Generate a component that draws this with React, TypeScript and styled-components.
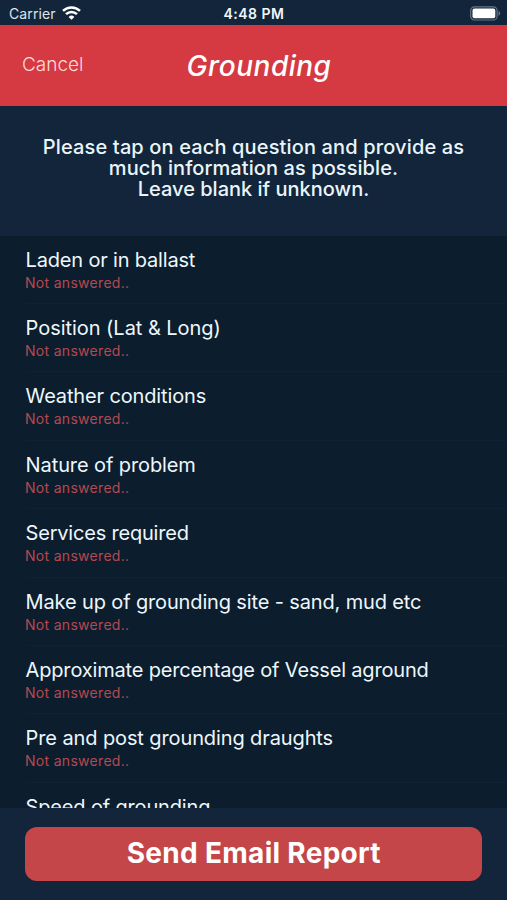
import React from 'react';
import styled, { createGlobalStyle } from 'styled-components';

const GlobalStyle = createGlobalStyle`
  *, *::before, *::after { box-sizing: border-box; }
  body { margin: 0; background: #12253a; }
`;

const Screen = styled.div`
  display: flex;
  flex-direction: column;
  width: 100%;
  height: 900px;
  overflow: hidden;
  background: #12253a;
  font-family: Inter, sans-serif;
  color: #eef7fc;
`;

const StatusBar = styled.div`
  flex: none;
  display: grid;
  grid-template-columns: 1fr auto 1fr;
  align-items: center;
  height: 25.3px;
  padding: 2px 6px 0 9px;
  font-size: 14px;
  line-height: 20px;
`;

const Network = styled.div`
  display: flex;
  align-items: center;
  gap: 6px;
  letter-spacing: 0.12px;
  color: #dde6ee;

  svg { margin-bottom: 2px; }
`;

const Clock = styled.div`
  margin-right: 2px;
  font-weight: 600;
  letter-spacing: 0.5px;
`;

const Battery = styled.div`
  display: flex;
  justify-content: flex-end;
  padding-bottom: 1px;
`;

const NavBar = styled.header`
  flex: none;
  display: grid;
  grid-template-columns: 1fr auto 1fr;
  align-items: center;
  height: 80.7px;
  padding: 0 22px;
  background: #d53a42;
`;

const CancelButton = styled.button`
  justify-self: start;
  padding: 0 0 2px;
  border: 0;
  background: none;
  color: #ffdadb;
  font: 300 19px/24px Inter, sans-serif;
`;

const Title = styled.h1`
  margin: 0 0 0 11px;
  font-size: 28px;
  line-height: 34px;
  font-style: italic;
  font-weight: 500;
  letter-spacing: 0.5px;
  color: #fff;
`;

const Intro = styled.div`
  flex: none;
  height: 129.7px;
  padding-top: 31.4px;
  font-size: 20px;
  line-height: 20.7px;
  font-weight: 500;
  text-align: center;
  color: #e9f5fc;
`;

const IntroLine = styled.p<{ $tracking: number }>`
  margin: 0;
  letter-spacing: ${(p) => p.$tracking}px;
`;

const QuestionList = styled.ul`
  flex: 1;
  min-height: 0;
  margin: 0;
  padding: 0 0 0 25.6px;
  overflow: hidden;
  list-style: none;
  background: #0c1e2e;
`;

const Question = styled.li`
  display: flex;
  flex-direction: column;
  height: 68.4px;
  padding-top: 11.9px;
  border-bottom: 1px solid #0f2234;
`;

const Prompt = styled.span<{ $tracking: number }>`
  font-size: 20px;
  line-height: 24px;
  letter-spacing: ${(p) => p.$tracking}px;
  white-space: nowrap;
`;

const Answer = styled.span`
  margin: 1px 0 0 -0.6px;
  font-size: 14px;
  line-height: 20px;
  letter-spacing: 0.3px;
  color: #b64850;
`;

const Footer = styled.footer`
  flex: none;
  height: 92.4px;
  padding: 19px 24.6px 0 25.2px;
`;

const SendButton = styled.button`
  display: block;
  width: 100%;
  height: 54px;
  padding: 0 0 2px;
  border: 0;
  border-radius: 12px;
  background: #c54648;
  color: #fff;
  font: 700 28px/52px Inter, sans-serif;
  letter-spacing: 0.3px;
`;

const intro = [
  { text: 'Please tap on each question and provide as', tracking: 0.14 },
  { text: 'much information as possible.', tracking: 0.08 },
  { text: 'Leave blank if unknown.', tracking: 0 },
];

const questions = [
  { prompt: 'Laden or in ballast', tracking: -0.18 },
  { prompt: 'Position (Lat & Long)', tracking: -0.04 },
  { prompt: 'Weather conditions', tracking: -0.14 },
  { prompt: 'Nature of problem', tracking: -0.1 },
  { prompt: 'Services required', tracking: -0.2 },
  { prompt: 'Make up of grounding site - sand, mud etc', tracking: -0.14 },
  { prompt: 'Approximate percentage of Vessel aground', tracking: -0.17 },
  { prompt: 'Pre and post grounding draughts', tracking: -0.11 },
  { prompt: 'Speed of grounding', tracking: -0.16 },
];

const WifiIcon = () => (
  <svg width="19" height="14" viewBox="0 0 19 14" fill="none" stroke="#fff" strokeWidth="2.5">
    <path d="M1 4.9a12.2 12.2 0 0 1 17 0" />
    <path d="M4 8.2a7.9 7.9 0 0 1 11 0" />
    <path d="M9.5 13.8 6.6 10.9a4.1 4.1 0 0 1 5.8 0z" fill="#fff" stroke="none" />
  </svg>
);

const BatteryIcon = () => (
  <svg width="31" height="15" viewBox="0 0 31 15">
    <rect x="0.7" y="0.8" width="26.4" height="13.2" rx="3.8" fill="none" stroke="#66778a" strokeWidth="1.2" />
    <rect x="2.5" y="2.6" width="22.8" height="9.6" rx="1.8" fill="#fff" />
    <path d="M28.5 5.1c2.2.8 2.2 3.8 0 4.6z" fill="#66778a" />
  </svg>
);

export default function App() {
  return (
    <>
      <GlobalStyle />
      <Screen>
        <StatusBar>
          <Network>
            Carrier
            <WifiIcon />
          </Network>
          <Clock>4:48 PM</Clock>
          <Battery>
            <BatteryIcon />
          </Battery>
        </StatusBar>
        <NavBar>
          <CancelButton>Cancel</CancelButton>
          <Title>Grounding</Title>
        </NavBar>
        <Intro>
          {intro.map((line) => (
            <IntroLine key={line.text} $tracking={line.tracking}>
              {line.text}
            </IntroLine>
          ))}
        </Intro>
        <QuestionList>
          {questions.map((q) => (
            <Question key={q.prompt}>
              <Prompt $tracking={q.tracking}>{q.prompt}</Prompt>
              <Answer>Not answered..</Answer>
            </Question>
          ))}
        </QuestionList>
        <Footer>
          <SendButton>Send Email Report</SendButton>
        </Footer>
      </Screen>
    </>
  );
}
